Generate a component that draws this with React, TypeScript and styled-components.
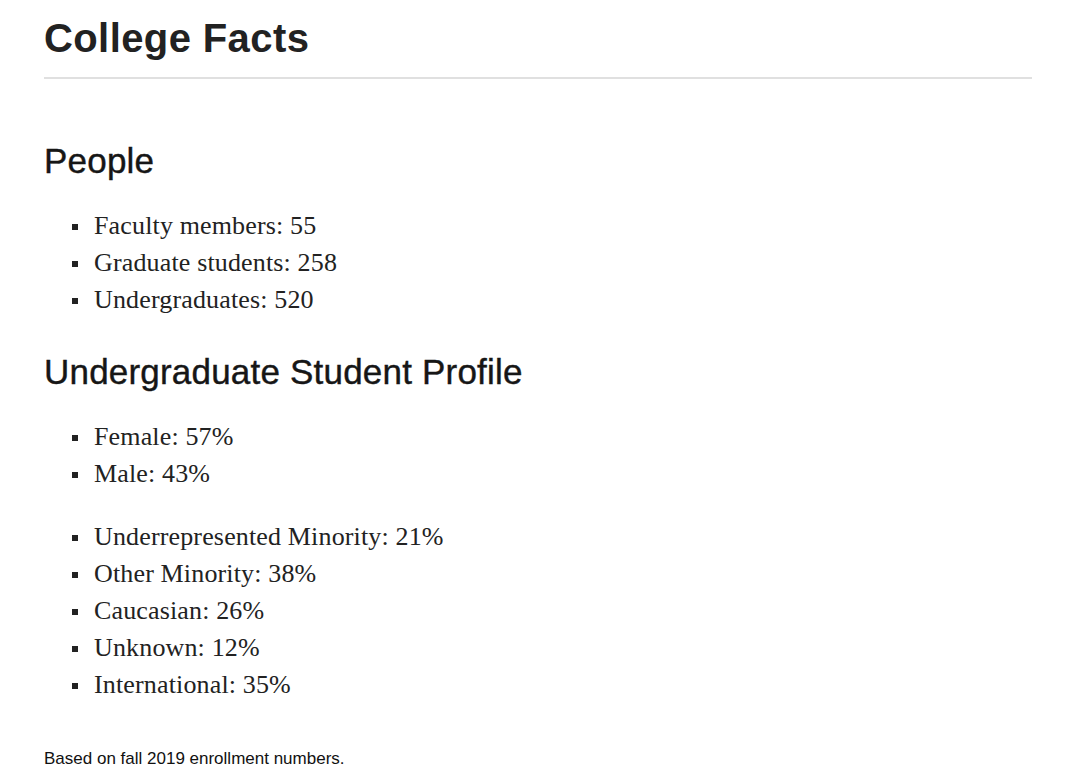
import styled, { createGlobalStyle } from "styled-components";

const GlobalStyle = createGlobalStyle`
  html, body {
    margin: 0;
    padding: 0;
    background: #ffffff;
  }
  * {
    box-sizing: border-box;
  }
`;

const peopleFacts = [
  "Faculty members: 55",
  "Graduate students: 258",
  "Undergraduates: 520",
];

const genderFacts = ["Female: 57%", "Male: 43%"];

const ethnicityFacts = [
  "Underrepresented Minority: 21%",
  "Other Minority: 38%",
  "Caucasian: 26%",
  "Unknown: 12%",
  "International: 35%",
];

const App = () => {
  return (
    <>
      <GlobalStyle />
      <Page>
        <Title>College Facts</Title>
        <Divider />
        <Section>
          <SectionTitle>People</SectionTitle>
          <FactList>
            {peopleFacts.map((fact) => (
              <FactItem key={fact}>{fact}</FactItem>
            ))}
          </FactList>
        </Section>
        <Section>
          <SectionTitle>Undergraduate Student Profile</SectionTitle>
          <FactList>
            {genderFacts.map((fact) => (
              <FactItem key={fact}>{fact}</FactItem>
            ))}
          </FactList>
          <FactList $spaced>
            {ethnicityFacts.map((fact) => (
              <FactItem key={fact}>{fact}</FactItem>
            ))}
          </FactList>
        </Section>
        <Footnote>Based on fall 2019 enrollment numbers.</Footnote>
      </Page>
    </>
  );
};

export default App;

const Page = styled.main`
  width: 1032px;
  padding: 14px 0 0 44px;
  color: #222222;
`;

const Title = styled.h1`
  margin: 0;
  font-family: "Liberation Sans", Arial, sans-serif;
  font-size: 40px;
  font-weight: 700;
  line-height: 48px;
  letter-spacing: 0.4px;
  color: #222222;
`;

const Divider = styled.hr`
  margin: 15px 0 0 0;
  border: none;
  height: 2px;
  background: #e0e0e0;
`;

const Section = styled.section`
  display: flex;
  flex-direction: column;
  margin-top: 61px;

  & + & {
    margin-top: 33px;
  }
`;

const SectionTitle = styled.h2`
  margin: 0;
  font-family: "Liberation Sans", Arial, sans-serif;
  font-size: 35px;
  font-weight: 400;
  line-height: 42px;
  letter-spacing: 0.2px;
  color: #161616;
  -webkit-text-stroke: 0.4px #161616;
`;

const FactList = styled.ul<{ $spaced?: boolean }>`
  list-style: none;
  margin: ${({ $spaced }) => ($spaced ? "26px" : "25px")} 0 0 0;
  padding: 0 0 0 28px;
`;

const FactItem = styled.li`
  display: flex;
  align-items: center;
  gap: 16px;
  font-family: "Liberation Serif", "Times New Roman", serif;
  font-size: 26px;
  line-height: 37px;
  letter-spacing: 0.15px;
  color: #222222;

  &::before {
    content: "";
    flex: none;
    width: 6px;
    height: 6px;
    margin-top: 2px;
    background: #222222;
  }
`;

const Footnote = styled.p`
  margin: 44px 0 0 0;
  font-family: "Liberation Sans", Arial, sans-serif;
  font-size: 17px;
  line-height: 24px;
  color: #111111;
`;
